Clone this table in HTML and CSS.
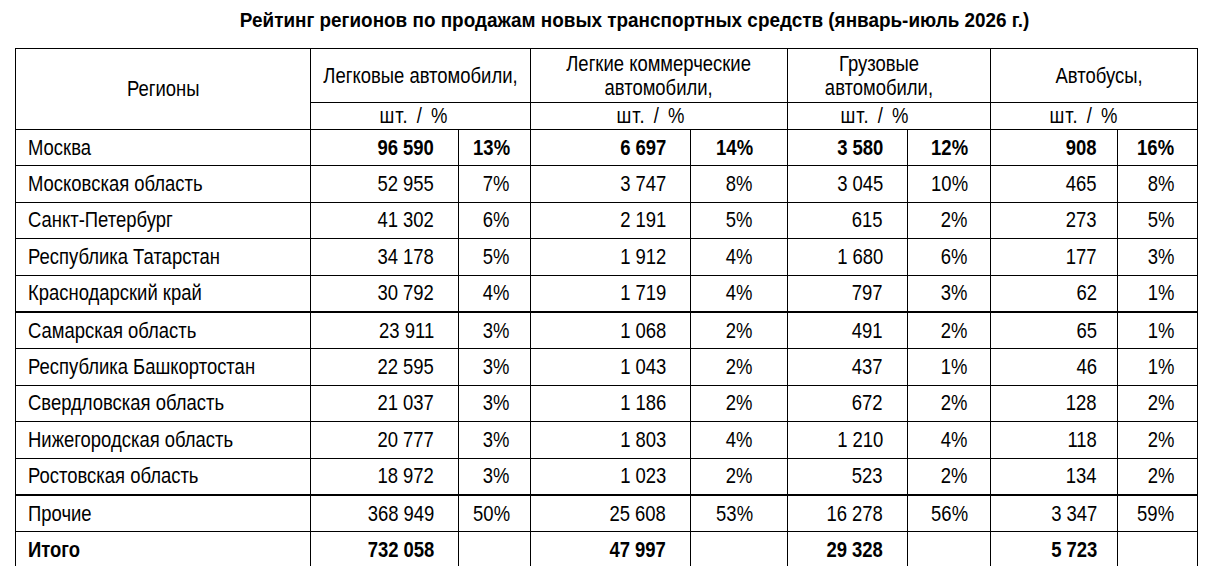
FILE: index.html
```html
<!DOCTYPE html>
<html lang="ru">
<head>
<meta charset="utf-8">
<title>Рейтинг регионов</title>
<link rel="stylesheet" href="styles.css">
</head>
<body>
<div class="page">
  <h1 class="title"><span class="t">Рейтинг регионов по продажам новых транспортных средств (январь-июль 2026 г.)</span></h1>
  <table class="rating">
    <colgroup>
      <col class="c-reg">
      <col class="c1a"><col class="c1b">
      <col class="c2a"><col class="c2b">
      <col class="c3a"><col class="c3b">
      <col class="c4a"><col class="c4b">
    </colgroup>
    <thead>
      <tr class="h1">
        <th rowspan="2" class="hreg"><span class="t">Регионы</span></th>
        <th colspan="2" class="g1"><span class="t">Легковые автомобили,</span></th>
        <th colspan="2" class="g2"><span class="t">Легкие коммерческие<br>автомобили,</span></th>
        <th colspan="2" class="g3"><span class="t">Грузовые<br>автомобили,</span></th>
        <th colspan="2" class="g4"><span class="t">Автобусы,</span></th>
      </tr>
      <tr class="h2">
        <th colspan="2" class="u1"><span class="t">шт. / %</span></th>
        <th colspan="2" class="u2"><span class="t">шт. / %</span></th>
        <th colspan="2" class="u3"><span class="t">шт. / %</span></th>
        <th colspan="2" class="u4"><span class="t">шт. / %</span></th>
      </tr>
    </thead>
    <tbody>
      <tr class="lead"><td><span class="t">Москва</span></td><td><span class="t">96 590</span></td><td><span class="t">13%</span></td><td><span class="t">6 697</span></td><td><span class="t">14%</span></td><td><span class="t">3 580</span></td><td><span class="t">12%</span></td><td><span class="t">908</span></td><td><span class="t">16%</span></td></tr>
      <tr><td><span class="t">Московская область</span></td><td><span class="t">52 955</span></td><td><span class="t">7%</span></td><td><span class="t">3 747</span></td><td><span class="t">8%</span></td><td><span class="t">3 045</span></td><td><span class="t">10%</span></td><td><span class="t">465</span></td><td><span class="t">8%</span></td></tr>
      <tr><td><span class="t">Санкт-Петербург</span></td><td><span class="t">41 302</span></td><td><span class="t">6%</span></td><td><span class="t">2 191</span></td><td><span class="t">5%</span></td><td><span class="t">615</span></td><td><span class="t">2%</span></td><td><span class="t">273</span></td><td><span class="t">5%</span></td></tr>
      <tr><td><span class="t">Республика Татарстан</span></td><td><span class="t">34 178</span></td><td><span class="t">5%</span></td><td><span class="t">1 912</span></td><td><span class="t">4%</span></td><td><span class="t">1 680</span></td><td><span class="t">6%</span></td><td><span class="t">177</span></td><td><span class="t">3%</span></td></tr>
      <tr class="sep"><td><span class="t">Краснодарский край</span></td><td><span class="t">30 792</span></td><td><span class="t">4%</span></td><td><span class="t">1 719</span></td><td><span class="t">4%</span></td><td><span class="t">797</span></td><td><span class="t">3%</span></td><td><span class="t">62</span></td><td><span class="t">1%</span></td></tr>
      <tr><td><span class="t">Самарская область</span></td><td><span class="t">23 911</span></td><td><span class="t">3%</span></td><td><span class="t">1 068</span></td><td><span class="t">2%</span></td><td><span class="t">491</span></td><td><span class="t">2%</span></td><td><span class="t">65</span></td><td><span class="t">1%</span></td></tr>
      <tr><td><span class="t">Республика Башкортостан</span></td><td><span class="t">22 595</span></td><td><span class="t">3%</span></td><td><span class="t">1 043</span></td><td><span class="t">2%</span></td><td><span class="t">437</span></td><td><span class="t">1%</span></td><td><span class="t">46</span></td><td><span class="t">1%</span></td></tr>
      <tr><td><span class="t">Свердловская область</span></td><td><span class="t">21 037</span></td><td><span class="t">3%</span></td><td><span class="t">1 186</span></td><td><span class="t">2%</span></td><td><span class="t">672</span></td><td><span class="t">2%</span></td><td><span class="t">128</span></td><td><span class="t">2%</span></td></tr>
      <tr><td><span class="t">Нижегородская область</span></td><td><span class="t">20 777</span></td><td><span class="t">3%</span></td><td><span class="t">1 803</span></td><td><span class="t">4%</span></td><td><span class="t">1 210</span></td><td><span class="t">4%</span></td><td><span class="t">118</span></td><td><span class="t">2%</span></td></tr>
      <tr class="sep"><td><span class="t">Ростовская область</span></td><td><span class="t">18 972</span></td><td><span class="t">3%</span></td><td><span class="t">1 023</span></td><td><span class="t">2%</span></td><td><span class="t">523</span></td><td><span class="t">2%</span></td><td><span class="t">134</span></td><td><span class="t">2%</span></td></tr>
      <tr><td><span class="t">Прочие</span></td><td><span class="t">368 949</span></td><td><span class="t">50%</span></td><td><span class="t">25 608</span></td><td><span class="t">53%</span></td><td><span class="t">16 278</span></td><td><span class="t">56%</span></td><td><span class="t">3 347</span></td><td><span class="t">59%</span></td></tr>
      <tr class="total"><td><span class="t">Итого</span></td><td><span class="t">732 058</span></td><td></td><td><span class="t">47 997</span></td><td></td><td><span class="t">29 328</span></td><td></td><td><span class="t">5 723</span></td><td></td></tr>
    </tbody>
  </table>
</div>
</body>
</html>
```
FILE: styles.css
```css
html, body {
  margin: 0;
  padding: 0;
  background: #ffffff;
}
body {
  font-family: "Liberation Sans", Arial, sans-serif;
  color: #000;
}
.page {
  padding: 9px 0 0 15px;
}
.t {
  display: inline-block;
  white-space: nowrap;
}
.title {
  margin: 0 0 17px 0;
  width: 1240px;
  text-align: center;
  font-size: 21px;
  font-weight: bold;
  line-height: 22px;
  height: 22px;
}
.title .t {
  transform: scaleX(0.9);
  transform-origin: 50% 50%;
  margin: 0 -60px;
}
.rating {
  border-collapse: collapse;
  table-layout: fixed;
  width: 1182px;
  font-size: 22.5px;
}
.c-reg { width: 295px; }
.c1a { width: 148px; }
.c1b { width: 72px; }
.c2a { width: 160px; }
.c2b { width: 97px; }
.c3a { width: 120px; }
.c3b { width: 83px; }
.c4a { width: 127px; }
.c4b { width: 80px; }

.rating th,
.rating td {
  border: 1px solid #000;
  padding: 0;
  white-space: nowrap;
  overflow: visible;
}
.rating th {
  font-weight: normal;
  text-align: center;
  line-height: 24px;
}
.rating th .t {
  transform: scaleX(0.82);
  transform-origin: 50% 50%;
  margin: 0 -40px;
}
.h1 th { height: 53px; }
.h2 th { height: 26px; }
.h2 th .t {
  word-spacing: 3px;
  letter-spacing: 1px;
}

.rating td {
  height: 35.4px;
  line-height: 26px;
  text-align: right;
  padding-right: 24px;
}
.rating td .t {
  transform: scaleX(0.82);
  transform-origin: 100% 50%;
}
.rating td:first-child {
  text-align: left;
  padding-left: 12px;
  padding-right: 0;
}
.rating td:first-child .t {
  transform-origin: 0 50%;
}
.rating td:nth-child(3) { padding-right: 20px; }
.rating td:nth-child(5) { padding-right: 34px; }
.rating td:nth-child(7) { padding-right: 22px; }
.rating td:nth-child(8) { padding-right: 20px; }
.rating td:nth-child(9) { padding-right: 23px; }

.u1 { padding-right: 14px !important; }
.u2 { padding-right: 16px !important; }
.u3 { padding-right: 28px !important; }
.u4 { padding-right: 20px !important; }
.g3 { padding-right: 20px !important; }
.g4 { padding-left: 10px !important; }

.lead td { font-weight: bold; }
.lead td:first-child { font-weight: normal; }
.total td { font-weight: bold; }
.sep td { border-bottom-width: 2px; }
```
